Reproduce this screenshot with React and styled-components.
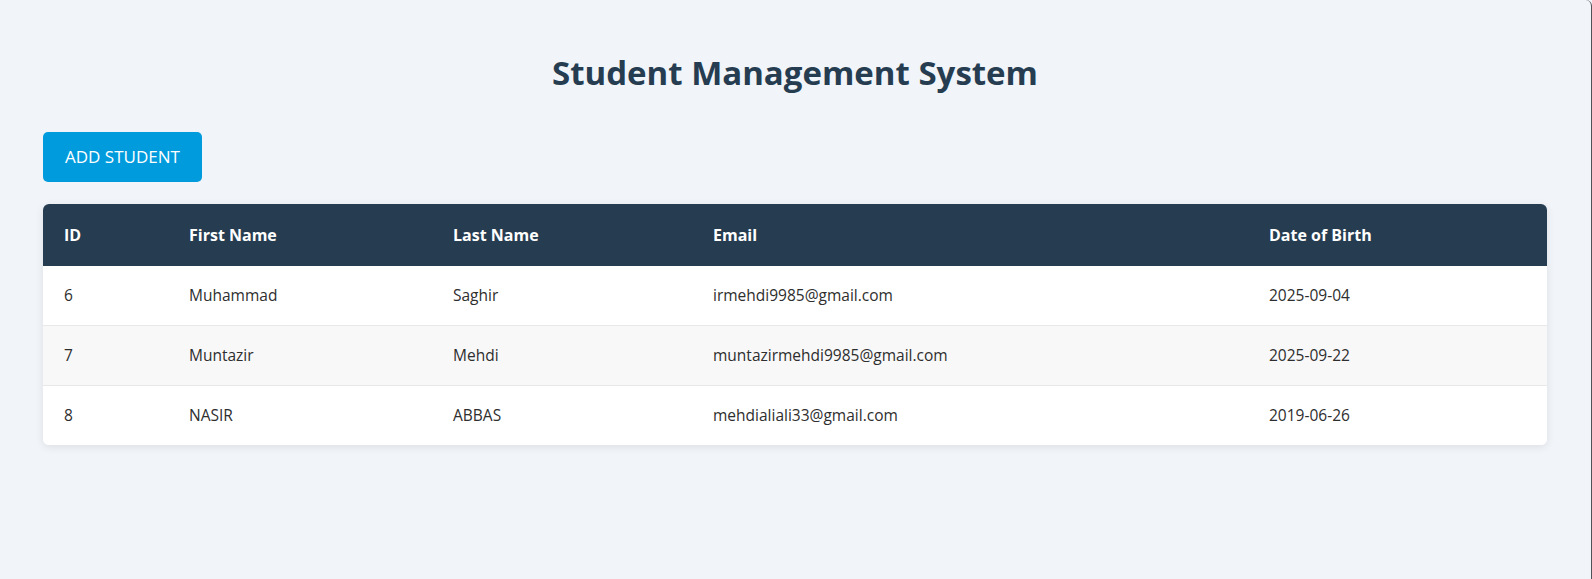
import styled, { createGlobalStyle } from "styled-components";

const GlobalStyle = createGlobalStyle`
  html, body {
    margin: 0;
    padding: 0;
    background: #f1f4f8;
  }
  body {
    font-family: "Open Sans", "Noto Sans", sans-serif;
    color: #333;
  }
`;

const Page = styled.div`
  min-height: 100vh;
  box-sizing: border-box;
  padding: 54px 44px 40px 43px;
  border-right: 1px solid #4f5358;
  border-top-right-radius: 6px;
`;

const Title = styled.h1`
  margin: 0;
  text-align: center;
  font-size: 33px;
  line-height: 38px;
  font-weight: 700;
  color: #263d51;
`;

const Toolbar = styled.div`
  display: flex;
  margin: 40px 0 22px;
`;

const Button = styled.button`
  border: none;
  border-radius: 5px;
  background-color: #009bdd;
  color: white;
  font-family: inherit;
  font-size: 17px;
  line-height: 22px;
  padding: 14px 22px;
  cursor: pointer;
`;

const TableCard = styled.div`
  background: white;
  border-radius: 6px;
  overflow: hidden;
  box-shadow: 0 2px 8px rgba(0, 0, 0, 0.09);
`;

const Table = styled.table`
  width: 100%;
  border-collapse: collapse;
  table-layout: fixed;
`;

const HeadCell = styled.th`
  background-color: #263d51;
  color: white;
  text-align: left;
  font-size: 16px;
  font-weight: 700;
  line-height: 22px;
  padding: 20px 20px 20px 21px;
`;

const Row = styled.tr`
  background-color: ${(p) => (p.$striped ? "#f8f8f8" : "white")};
  border-bottom: 1px solid #e8e8e8;
  &:last-child {
    border-bottom: none;
  }
`;

const Cell = styled.td`
  font-size: 15.5px;
  line-height: 21px;
  color: #2e2e2e;
  padding: 19px 20px 19px 21px;
`;

const columns = [
  { label: "ID", width: 125 },
  { label: "First Name", width: 264 },
  { label: "Last Name", width: 260 },
  { label: "Email", width: 556 },
  { label: "Date of Birth", width: 299 },
];

const students = [
  { id: 6, first: "Muhammad", last: "Saghir", email: "irmehdi9985@gmail.com", dob: "2025-09-04" },
  { id: 7, first: "Muntazir", last: "Mehdi", email: "muntazirmehdi9985@gmail.com", dob: "2025-09-22" },
  { id: 8, first: "NASIR", last: "ABBAS", email: "mehdialiali33@gmail.com", dob: "2019-06-26" },
];

const App = () => {
  return (
    <>
      <GlobalStyle />
      <Page>
        <Title>Student Management System</Title>
        <Toolbar>
          <Button>ADD STUDENT</Button>
        </Toolbar>
        <TableCard>
          <Table>
            <colgroup>
              {columns.map((c) => (
                <col key={c.label} style={{ width: c.width }} />
              ))}
            </colgroup>
            <thead>
              <tr>
                {columns.map((c) => (
                  <HeadCell key={c.label}>{c.label}</HeadCell>
                ))}
              </tr>
            </thead>
            <tbody>
              {students.map((s, i) => (
                <Row key={s.id} $striped={i % 2 === 1}>
                  <Cell>{s.id}</Cell>
                  <Cell>{s.first}</Cell>
                  <Cell>{s.last}</Cell>
                  <Cell>{s.email}</Cell>
                  <Cell>{s.dob}</Cell>
                </Row>
              ))}
            </tbody>
          </Table>
        </TableCard>
      </Page>
    </>
  );
};

export default App;
